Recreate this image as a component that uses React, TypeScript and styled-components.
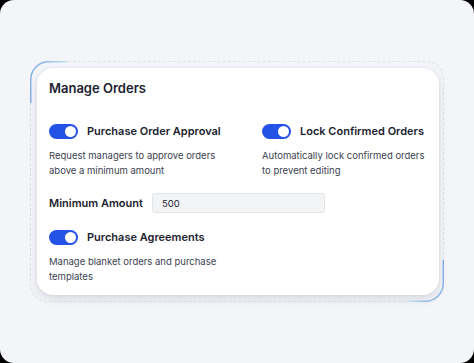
import React from "react"
import styled, { createGlobalStyle } from "styled-components"

const GlobalStyle = createGlobalStyle`
  html, body {
    margin: 0;
    padding: 0;
    background: #000;
  }
  body {
    font-family: Inter, "Noto Sans", "Liberation Sans", sans-serif;
  }
`

const Page = styled.div`
  width: 474px;
  height: 363px;
  box-sizing: border-box;
  background: #f4f5f8;
  border-radius: 14px;
  display: flex;
  align-items: center;
  justify-content: center;
`

const Frame = styled.div`
  position: relative;
  width: 414px;
  height: 241px;
  box-sizing: border-box;
  border: 1px dashed #dde1e8;
  border-radius: 18px;
  padding: 6px 4px 6px 6px;
  display: flex;
`

const Accent = styled.svg<{ $corner: "tl" | "br" }>`
  position: absolute;
  width: 40px;
  height: 44px;
  ${({ $corner }) =>
    $corner === "tl"
      ? "left: -1px; top: -1px;"
      : "right: -1px; bottom: -1px; transform: rotate(180deg);"}
`

const Card = styled.div`
  flex: 1;
  background: #fff;
  border-radius: 16px;
  box-shadow: 0 4px 10px rgba(30, 40, 60, 0.13), 0 0 2px rgba(30, 40, 60, 0.08);
  padding: 12px 12px 0 12px;
  box-sizing: border-box;
`

const Title = styled.h2`
  margin: 0 0 27px 0;
  font-size: 13px;
  font-weight: 600;
  color: #1c2230;
  line-height: 16px;
`

const Grid = styled.div`
  display: grid;
  grid-template-columns: 213px 1fr;
`

const Setting = styled.div`
  display: flex;
  flex-direction: column;
`

const ToggleRow = styled.div`
  display: flex;
  align-items: center;
  gap: 9px;
  height: 16px;
`

const Track = styled.span`
  width: 29px;
  height: 15px;
  border-radius: 8px;
  background: #2451e6;
  position: relative;
  flex-shrink: 0;
`

const Knob = styled.span`
  position: absolute;
  right: 2px;
  top: 2px;
  width: 11px;
  height: 11px;
  border-radius: 50%;
  background: #fff;
`

const Label = styled.span`
  font-size: 11px;
  font-weight: 600;
  color: #1c2230;
  white-space: nowrap;
`

const Desc = styled.p`
  margin: 9px 0 0 0;
  font-size: 9.5px;
  line-height: 15px;
  color: #3a4150;
`

const AmountRow = styled.div`
  display: flex;
  align-items: center;
  gap: 9px;
  margin: 15px 0 16px 0;
`

const AmountInput = styled.div`
  width: 173px;
  height: 20px;
  box-sizing: border-box;
  background: #f3f4f6;
  border: 1px solid #e3e5e9;
  border-radius: 3px;
  font-size: 9.5px;
  color: #1c2230;
  padding-left: 9px;
  display: flex;
  align-items: center;
`

const Toggle = () => (
  <Track>
    <Knob />
  </Track>
)

const AccentArc = ({ corner }: { corner: "tl" | "br" }) => (
  <Accent $corner={corner} viewBox="0 0 40 44">
    <defs>
      <linearGradient id={`g-${corner}`} x1="0" y1="1" x2="1" y2="0">
        <stop offset="0" stopColor="#7aa7e6" />
        <stop offset="0.7" stopColor="#8fbbe9" />
        <stop offset="1" stopColor="#bfe3ef" />
      </linearGradient>
    </defs>
    <path
      d="M0.75 42 V18.75 A18 18 0 0 1 18.75 0.75 H37"
      fill="none"
      stroke={`url(#g-${corner})`}
      strokeWidth="1.4"
    />
  </Accent>
)

const App: React.FC = () => (
  <>
    <GlobalStyle />
    <Page>
      <Frame>
        <AccentArc corner="tl" />
        <AccentArc corner="br" />
        <Card>
          <Title>Manage Orders</Title>
          <Grid>
            <Setting>
              <ToggleRow>
                <Toggle />
                <Label>Purchase Order Approval</Label>
              </ToggleRow>
              <Desc>
                Request managers to approve orders
                <br />
                above a minimum amount
              </Desc>
            </Setting>
            <Setting>
              <ToggleRow>
                <Toggle />
                <Label>Lock Confirmed Orders</Label>
              </ToggleRow>
              <Desc>
                Automatically lock confirmed orders
                <br />
                to prevent editing
              </Desc>
            </Setting>
          </Grid>
          <AmountRow>
            <Label>Minimum Amount</Label>
            <AmountInput>500</AmountInput>
          </AmountRow>
          <Setting>
            <ToggleRow>
              <Toggle />
              <Label>Purchase Agreements</Label>
            </ToggleRow>
            <Desc>
              Manage blanket orders and purchase
              <br />
              templates
            </Desc>
          </Setting>
        </Card>
      </Frame>
    </Page>
  </>
)

export default App
